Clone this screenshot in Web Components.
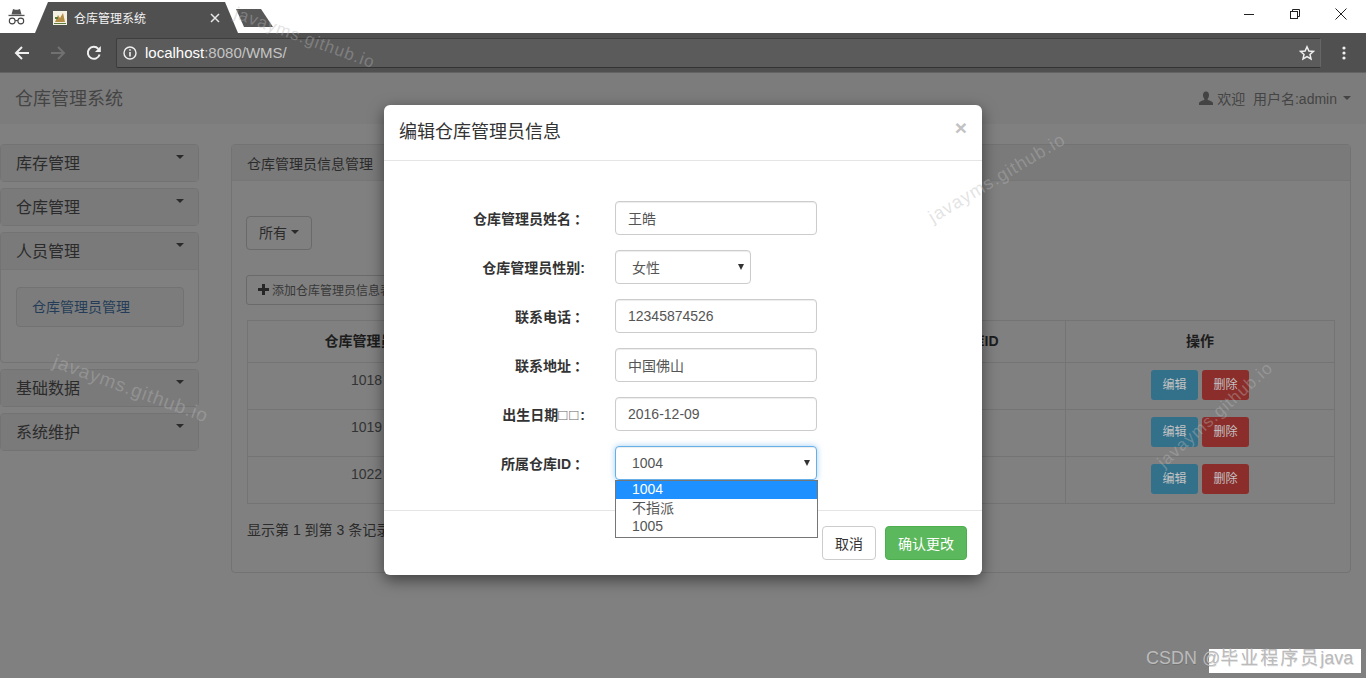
<!DOCTYPE html>
<html lang="zh">
<head>
<meta charset="utf-8">
<title>仓库管理系统</title>
<style>
  html, body { margin: 0; height: 100%; overflow: hidden; background: #fff; }
  body { font-family: "Liberation Sans", "Noto Sans CJK SC", sans-serif; font-size: 14px; color: #2a2a2a; }
</style>
</head>
<body>
<wms-app>
  <browser-chrome></browser-chrome>
  <nav-bar></nav-bar>
  <div slot="sidebar">
    <side-panel>库存管理</side-panel>
    <side-panel>仓库管理</side-panel>
    <side-panel open link="仓库管理员管理">人员管理</side-panel>
    <side-panel>基础数据</side-panel>
    <side-panel>系统维护</side-panel>
  </div>
  <data-panel slot="main"></data-panel>
  <edit-modal slot="overlay"></edit-modal>
  <water-mark slot="overlay" x="54" y="360" angle="20" size="19">javayms.github.io</water-mark>
  <water-mark slot="overlay" x="930" y="218" angle="-31" size="18">javayms.github.io</water-mark>
  <water-mark slot="overlay" x="1160" y="464" angle="-42" size="17">javayms.github.io</water-mark>
  <water-mark slot="overlay" x="235" y="12" angle="20" size="17">javayms.github.io</water-mark>
  <csdn-tag slot="overlay">CSDN @<span style="letter-spacing:2px">毕业程序员</span>java</csdn-tag>
</wms-app>

<script>
class WmsApp extends HTMLElement {
  constructor() {
    super();
    this.attachShadow({ mode: "open" });
  }
  connectedCallback() {
    this.shadowRoot.innerHTML = `
      <style>
        :host { display: flex; flex-direction: column; position: relative; width: 1366px; height: 678px; overflow: hidden; background: #808080; }
        .content { display: flex; gap: 32px; padding: 0 15px 0 0; align-items: flex-start; }
        .side { width: 199px; flex: none; }
        .main { flex: 1; min-width: 0; }
      </style>
      <slot></slot>
      <div class="content">
        <div class="side"><slot name="sidebar"></slot></div>
        <div class="main"><slot name="main"></slot></div>
      </div>
      <slot name="overlay"></slot>
    `;
  }
}

class BrowserChrome extends HTMLElement {
  constructor() {
    super();
    this.attachShadow({ mode: "open" });
  }
  connectedCallback() {
    this.shadowRoot.innerHTML = `
      <style>
        :host { display: block; flex: none; }
        svg { display: block; flex: none; }
        .strip { display: flex; align-items: flex-end; height: 33px; background: #fff; }
        .incog { width: 35px; height: 33px; display: flex; justify-content: center; padding-top: 8px; box-sizing: border-box; padding-right: 3px; }
        .tab { width: 203px; height: 31px; background: #505050; display: flex; align-items: center; box-sizing: border-box; padding: 0 18px; gap: 7px;
               clip-path: polygon(0 100%, 13px 0, 190px 0, 100% 100%); color: #f2f2f2; font-size: 12px; }
        .tab span { flex: 1; }
        .newtab { width: 37px; height: 18px; margin: 0 0 6px -2px; background: #585858; clip-path: polygon(0 0, 25px 0, 100% 100%, 8px 100%); }
        .spacer { flex: 1; }
        .winbtn { width: 46px; height: 33px; display: flex; align-items: flex-start; justify-content: center; padding-top: 8px; box-sizing: border-box; }
        .winbtns { display: flex; margin-right: 2px; }
        .bar { display: flex; align-items: center; height: 40px; background: #505050; border-bottom: 1px solid #636363; box-sizing: border-box; }
        .nav { width: 36px; display: flex; justify-content: center; }
        .nav.first { margin-left: 4px; }
        .address { flex: none; width: 1205px; height: 30px; margin-left: 4px; box-sizing: border-box; display: flex; align-items: center;
                   background: #5b5b5b; border: 1px solid #3e3e3e; border-bottom-color: #333; border-right-color: #666; border-radius: 2px; padding: 0 5px 0 6px; color: #c4c4c4; font-size: 15px; }
        .address b { font-weight: 400; color: #fff; }
        .url { flex: 1; margin-left: 8px; }
        .dots { flex: 1; display: flex; justify-content: center; }
      </style>
      <div class="strip">
        <div class="incog">
          <svg width="17" height="17" viewBox="0 0 17 17" fill="none">
            <path d="M3.5 6.5 L5 1 L7.3 1.8 H9.7 L12 1 L13.5 6.5 Z" fill="#555"/>
            <rect x="0.5" y="6.8" width="16" height="1.3" fill="#555"/>
            <circle cx="4.2" cy="13" r="2.9" stroke="#444" stroke-width="1.1"/>
            <circle cx="12.8" cy="13" r="2.9" stroke="#444" stroke-width="1.1"/>
            <path d="M7.1 12.6 H9.9" stroke="#444" stroke-width="1.1"/>
          </svg>
        </div>
        <div class="tab">
          <svg width="14" height="14" viewBox="0 0 14 14">
            <rect width="14" height="14" fill="#f4f0e2"/>
            <path d="M2 11 L5 4 L7 7 L10 2 L12 11 Z" fill="#b58d45"/>
            <path d="M1 12 H13 V13 H1 Z M2 6 H5 V8 H2 Z" fill="#5d7a3a"/>
          </svg>
          <span>仓库管理系统</span>
          <svg width="10" height="10" viewBox="0 0 10 10"><path d="M1 1 L9 9 M9 1 L1 9" stroke="#e8e8e8" stroke-width="1.5"/></svg>
        </div>
        <div class="newtab"></div>
        <div class="spacer"></div>
        <div class="winbtns">
          <div class="winbtn"><svg width="12" height="12" viewBox="0 0 12 12"><path d="M1 6.5 H11" stroke="#222" stroke-width="1"/></svg></div>
          <div class="winbtn"><svg width="12" height="12" viewBox="0 0 12 12" fill="none" stroke="#222"><rect x="1.5" y="3.5" width="7" height="7"/><path d="M3.5 3.5 V1.5 H10.5 V8.5 H8.5"/></svg></div>
          <div class="winbtn"><svg width="12" height="12" viewBox="0 0 12 12"><path d="M0.5 0.5 L11.5 11.5 M11.5 0.5 L0.5 11.5" stroke="#222" stroke-width="1"/></svg></div>
        </div>
      </div>
      <div class="bar">
        <div class="nav first"><svg width="16" height="16" viewBox="0 0 16 16" fill="none" stroke="#f0f0f0" stroke-width="2"><path d="M15 8 H2 M8 2 L2 8 L8 14"/></svg></div>
        <div class="nav"><svg width="16" height="16" viewBox="0 0 16 16" fill="none" stroke="#717171" stroke-width="2"><path d="M1 8 H14 M8 2 L14 8 L8 14"/></svg></div>
        <div class="nav"><svg width="16" height="16" viewBox="0 0 16 16" fill="none"><path d="M13.6 9.5 A6 6 0 1 1 12.3 3.8" stroke="#f0f0f0" stroke-width="2"/><path d="M14.8 1 V7 H9 Z" fill="#f0f0f0"/></svg></div>
        <div class="address">
          <svg width="14" height="14" viewBox="0 0 14 14" fill="none"><circle cx="7" cy="7" r="6" stroke="#f0f0f0" stroke-width="1.4"/><path d="M7 6 V10.5 M7 3.3 V4.8" stroke="#f0f0f0" stroke-width="1.6"/></svg>
          <div class="url"><b>localhost</b>:8080/WMS/</div>
          <svg width="16" height="16" viewBox="0 0 16 16" fill="none" stroke="#f0f0f0" stroke-width="1.5"><path d="M8 1.8 L9.9 6 L14.4 6.4 L11 9.4 L12 13.9 L8 11.6 L4 13.9 L5 9.4 L1.6 6.4 L6.1 6 Z"/></svg>
        </div>
        <div class="dots"><svg width="4" height="14" viewBox="0 0 4 14" fill="#f0f0f0"><circle cx="2" cy="2" r="1.6"/><circle cx="2" cy="7" r="1.6"/><circle cx="2" cy="12" r="1.6"/></svg></div>
      </div>
    `;
  }
}

class NavBar extends HTMLElement {
  constructor() {
    super();
    this.attachShadow({ mode: "open" });
  }
  connectedCallback() {
    this.shadowRoot.innerHTML = `
      <style>
        :host { display: flex; flex: none; align-items: center; justify-content: space-between; height: 51px; margin-bottom: 20px; padding: 0 15px 3px; box-sizing: border-box;
                background: #7c7c7c; color: #444; }
        .brand { font-size: 18px; }
        .user { display: flex; align-items: center; gap: 4px; font-size: 14px; padding-top: 2px; }
        .caret { width: 0; height: 0; border: 4px solid transparent; border-top-color: #444; border-bottom: 0; margin-left: 2px; }
        svg { display: block; }
      </style>
      <div class="brand">仓库管理系统</div>
      <div class="user">
        <svg width="14" height="14" viewBox="0 0 14 14" fill="#444"><path d="M7 0.5 C9.2 0.5 10.2 2.2 10 4.5 C9.9 6 9.3 7.2 8.6 8 L8.8 9 C11 9.7 13.5 10.5 14 11.8 V14 H0 V11.8 C0.5 10.5 3 9.7 5.2 9 L5.4 8 C4.7 7.2 4.1 6 4 4.5 C3.8 2.2 4.8 0.5 7 0.5 Z"/></svg>
        <span>欢迎&nbsp; 用户名:admin</span>
        <span class="caret"></span>
      </div>
    `;
  }
}

class SidePanel extends HTMLElement {
  constructor() {
    super();
    this.attachShadow({ mode: "open" });
  }
  connectedCallback() {
    const link = this.getAttribute("link");
    this.shadowRoot.innerHTML = `
      <style>
        :host { display: block; margin-bottom: 6px; border: 1px solid #737373; border-radius: 4px; background: #808080; color: #2b2b2b; }
        .head { position: relative; height: 36px; display: flex; align-items: center; padding: 0 0 2px 15px; box-sizing: border-box; background: #7a7a7a; font-size: 16px; border-radius: 3px 3px 0 0; }
        .caret { position: absolute; right: 14px; top: 10px; width: 0; height: 0; border: 4px solid transparent; border-top-color: #2b2b2b; border-bottom: 0; }
        .body { padding: 17px 14px 35px 15px; border-top: 1px solid #767676; }
        .well { height: 40px; box-sizing: border-box; display: flex; align-items: center; padding: 0 0 2px 15px; border: 1px solid #727272; border-radius: 4px; background: #7c7c7c; color: #243c58; }
      </style>
      <div class="head"><slot></slot><span class="caret"></span></div>
      ${this.hasAttribute("open") ? `<div class="body"><div class="well">${link}</div></div>` : ""}
    `;
  }
}

class DataPanel extends HTMLElement {
  constructor() {
    super();
    this.attachShadow({ mode: "open" });
  }
  connectedCallback() {
    const rows = ["1018", "1019", "1022"].map(id => `
      <tr>
        <td>${id}</td><td></td><td></td>
        <td class="ops"><span class="btn info">编辑</span><span class="btn danger">删除</span></td>
      </tr>`).join("");
    this.shadowRoot.innerHTML = `
      <style>
        :host { display: block; height: 429px; box-sizing: border-box; border: 1px solid #737373; border-radius: 4px; color: #2b2b2b; }
        .head { height: 35px; display: flex; align-items: center; padding-left: 15px; background: #7a7a7a; border-bottom: 1px solid #767676; }
        .body { padding: 35px 15px 0 14px; }
        .drop { width: 66px; height: 34px; box-sizing: border-box; display: flex; align-items: center; gap: 4px; padding: 0 0 3px 12px; border: 1px solid #6a6a6a; border-radius: 4px; }
        .caret { width: 0; height: 0; border: 4px solid transparent; border-top-color: #2b2b2b; border-bottom: 0; }
        .add { width: 300px; height: 30px; margin-top: 25px; box-sizing: border-box; display: flex; align-items: center; gap: 3px; padding: 0 0 2px 11px; border: 1px solid #6a6a6a; border-radius: 3px; font-size: 12px; color: #383838; }
        .add svg { display: block; }
        table { width: 1088px; margin: 15px 0 0 1px; border-collapse: collapse; table-layout: fixed; border: 1px solid #727272; text-align: center; }
        th, td { border: 1px solid #747474; padding: 7px 8px 8px; line-height: 20px; vertical-align: top; font-size: 14px; }
        td { color: #333; }
        thead tr { height: 42px; }
        th { vertical-align: middle; color: #1c1c1c; padding-bottom: 8px; }
        .ops { padding: 7px 8px 9px; white-space: nowrap; line-height: 0; }
        .btn { display: inline-block; width: 47px; height: 30px; line-height: 30px; font-size: 12px; border-radius: 3px; color: #c3c3c3; }
        .info { background: #33708a; margin-right: 4px; }
        .danger { background: #8b2e2b; }
        .count { margin: 16px 0 0 1px; line-height: 20px; color: #2b2b2b; }
      </style>
      <div class="head">仓库管理员信息管理</div>
      <div class="body">
        <div class="drop">所有<span class="caret"></span></div>
        <div class="add">
          <svg width="11" height="11" viewBox="0 0 11 11" fill="#262626"><path d="M4 0 H7 V4 H11 V7 H7 V11 H4 V7 H0 V4 H4 Z"/></svg>
          添加仓库管理员信息表
        </div>
        <table>
          <colgroup><col style="width:238px"><col style="width:376px"><col style="width:204px"><col></colgroup>
          <thead><tr><th>仓库管理员ID</th><th></th><th>所属仓库ID</th><th>操作</th></tr></thead>
          <tbody>${rows}</tbody>
        </table>
        <div class="count">显示第 1 到第 3 条记录</div>
      </div>
    `;
  }
}

class FormRow extends HTMLElement {
  constructor() {
    super();
    this.attachShadow({ mode: "open" });
  }
  connectedCallback() {
    const kind = this.getAttribute("kind") || "input";
    const width = this.getAttribute("width") || "202";
    const label = this.getAttribute("label")
      .replace("：", `<span class="colon">：</span>`)
      .replace("□□", `<span class="tofu">□□</span>`);
    const arrow = kind === "input" ? "" : `
      <svg class="arrow" width="6" height="6" viewBox="0 0 6 6" fill="#333"><path d="M0 0 H6 L3 6 Z"/></svg>`;
    this.shadowRoot.innerHTML = `
      <style>
        :host { display: flex; align-items: center; height: 34px; margin-bottom: 15px; }
        label { width: 186px; margin-right: 30px; text-align: right; font-weight: 700; color: #333; flex: none; }
        .colon { padding-left: 3px; margin-right: -3px; }
        .tofu { font-weight: 400; letter-spacing: 2px; color: #666; font-size: 15px; }
        .field { position: relative; width: ${width}px; height: 34px; box-sizing: border-box; display: flex; align-items: center; justify-content: space-between;
                 padding: 0 ${kind === "input" ? 12 : 6}px 0 ${kind === "input" ? 12 : 16}px; background: #fff; color: #555;
                 border: 1px solid #ccc; border-radius: 4px; box-shadow: inset 0 1px 1px rgba(0,0,0,.075); }
        :host([focused]) .field { border-color: #66afe9; box-shadow: inset 0 1px 1px rgba(0,0,0,.075), 0 0 6px rgba(102,175,233,.6); }
      </style>
      <label>${label}</label>
      <div class="field"><span>${this.getAttribute("value")}</span>${arrow}<slot></slot></div>
    `;
  }
}

class OptionList extends HTMLElement {
  constructor() {
    super();
    this.attachShadow({ mode: "open" });
  }
  connectedCallback() {
    this.shadowRoot.innerHTML = `
      <style>
        :host { display: block; position: absolute; left: -1px; top: 33px; width: 203px; box-sizing: border-box; height: 58px; background: #fff; border: 1px solid #767676; color: #555; z-index: 2; font-size: 14px; }
        div { height: 18px; line-height: 17px; padding-left: 16px; }
        .on { background: #1e90ff; color: #fff; margin-bottom: 1px; }
      </style>
      <div class="on">1004</div>
      <div>不指派</div>
      <div>1005</div>
    `;
  }
}

class EditModal extends HTMLElement {
  constructor() {
    super();
    this.attachShadow({ mode: "open" });
  }
  connectedCallback() {
    this.shadowRoot.innerHTML = `
      <style>
        :host { display: block; position: absolute; left: 384px; top: 105px; width: 598px; height: 470px; box-sizing: border-box; background: #fff; border-radius: 6px; box-shadow: 0 5px 15px rgba(0,0,0,.5); color: #333; }
        .head { position: relative; height: 56px; box-sizing: border-box; display: flex; align-items: center; padding: 0 0 5px 15px; border-bottom: 1px solid #e5e5e5; font-size: 18px; }
        .close { position: absolute; right: 15px; top: 12px; color: #c2c2c2; font-size: 21px; line-height: 1; font-weight: 700; }
        .body { padding: 40px 15px 15px; height: 350px; box-sizing: border-box; border-bottom: 1px solid #e5e5e5; }
        .foot { display: flex; justify-content: flex-end; gap: 9px; padding: 15px; }
        .btn { height: 34px; box-sizing: border-box; display: flex; align-items: center; justify-content: center; border-radius: 4px; border: 1px solid #ccc; }
        .cancel { width: 54px; }
        .ok { width: 82px; background: #5cb85c; border-color: #4cae4c; color: #fff; }
      </style>
      <div class="head">编辑仓库管理员信息<span class="close">×</span></div>
      <div class="body">
        <form-row label="仓库管理员姓名：" value="王皓"></form-row>
        <form-row label="仓库管理员性别:" value="女性" kind="select" width="136"></form-row>
        <form-row label="联系电话：" value="12345874526"></form-row>
        <form-row label="联系地址：" value="中国佛山"></form-row>
        <form-row label="出生日期□□:" value="2016-12-09"></form-row>
        <form-row label="所属仓库ID：" value="1004" kind="select" focused><option-list></option-list></form-row>
      </div>
      <div class="foot">
        <div class="btn cancel">取消</div>
        <div class="btn ok">确认更改</div>
      </div>
    `;
  }
}

class WaterMark extends HTMLElement {
  constructor() {
    super();
    this.attachShadow({ mode: "open" });
  }
  connectedCallback() {
    const x = this.getAttribute("x");
    const y = this.getAttribute("y");
    const angle = this.getAttribute("angle");
    const size = this.getAttribute("size");
    this.shadowRoot.innerHTML = `
      <style>
        :host { position: absolute; left: ${x}px; top: ${y}px; transform: rotate(${angle}deg); transform-origin: 0 50%; font-size: ${size}px; letter-spacing: 1px; color: rgba(184,184,184,.4); white-space: nowrap; line-height: 1; pointer-events: none; z-index: 5; }
      </style>
      <slot></slot>
    `;
    this.style.top = (parseFloat(y) - parseFloat(size) / 2) + "px";
  }
}

class CsdnTag extends HTMLElement {
  constructor() {
    super();
    this.attachShadow({ mode: "open" });
  }
  connectedCallback() {
    this.shadowRoot.innerHTML = `
      <style>
        :host { position: absolute; left: 0; top: 0; width: 0; height: 0; z-index: 6; }
        .patch { position: absolute; left: 1209px; top: 649px; width: 152px; height: 24px; background: #fff; }
        .text { position: absolute; left: 1146px; top: 646px; white-space: nowrap; font-size: 18px; line-height: 24px; color: #bbb; text-shadow: 0.5px 0.5px 0 rgba(0,0,0,.15); }
      </style>
      <div class="patch"></div>
      <div class="text"><slot></slot></div>
    `;
  }
}

customElements.define("wms-app", WmsApp);
customElements.define("browser-chrome", BrowserChrome);
customElements.define("nav-bar", NavBar);
customElements.define("side-panel", SidePanel);
customElements.define("data-panel", DataPanel);
customElements.define("form-row", FormRow);
customElements.define("option-list", OptionList);
customElements.define("edit-modal", EditModal);
customElements.define("water-mark", WaterMark);
customElements.define("csdn-tag", CsdnTag);
</script>
</body>
</html>
